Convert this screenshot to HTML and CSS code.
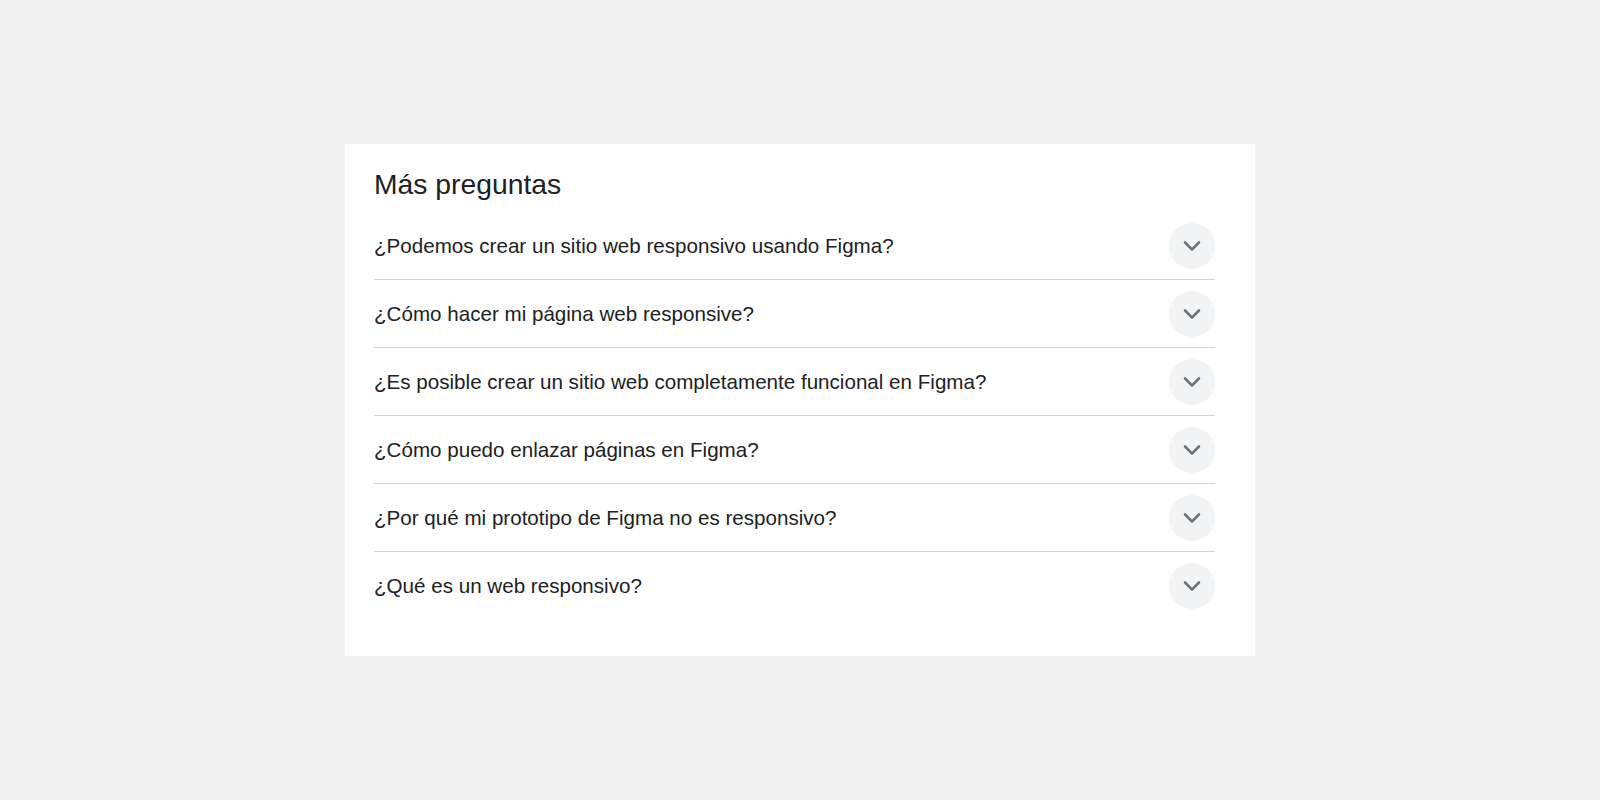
FILE: index.html
```html
<!DOCTYPE html>
<html lang="es">
<head>
<meta charset="utf-8">
<title>Más preguntas</title>
<link rel="stylesheet" href="styles.css">
</head>
<body>
  <section class="card">
    <h2 class="card-title">Más preguntas</h2>
    <ul class="faq">
      <li class="faq-row"><span class="faq-q">¿Podemos crear un sitio web responsivo usando Figma?</span><span class="toggle"><svg viewBox="0 0 24 24" width="24" height="24"><path d="M5 8.5l7 7 7-7"/></svg></span></li>
      <li class="faq-row"><span class="faq-q">¿Cómo hacer mi página web responsive?</span><span class="toggle"><svg viewBox="0 0 24 24" width="24" height="24"><path d="M5 8.5l7 7 7-7"/></svg></span></li>
      <li class="faq-row"><span class="faq-q">¿Es posible crear un sitio web completamente funcional en Figma?</span><span class="toggle"><svg viewBox="0 0 24 24" width="24" height="24"><path d="M5 8.5l7 7 7-7"/></svg></span></li>
      <li class="faq-row"><span class="faq-q">¿Cómo puedo enlazar páginas en Figma?</span><span class="toggle"><svg viewBox="0 0 24 24" width="24" height="24"><path d="M5 8.5l7 7 7-7"/></svg></span></li>
      <li class="faq-row"><span class="faq-q">¿Por qué mi prototipo de Figma no es responsivo?</span><span class="toggle"><svg viewBox="0 0 24 24" width="24" height="24"><path d="M5 8.5l7 7 7-7"/></svg></span></li>
      <li class="faq-row"><span class="faq-q">¿Qué es un web responsivo?</span><span class="toggle"><svg viewBox="0 0 24 24" width="24" height="24"><path d="M5 8.5l7 7 7-7"/></svg></span></li>
    </ul>
  </section>
</body>
</html>
```

FILE: styles.css
```css
html, body {
  margin: 0;
  padding: 0;
}

body {
  background: #f0f0f0;
  font-family: "Liberation Sans", Arial, Helvetica, sans-serif;
  color: #202124;
  width: 1600px;
  height: 800px;
  padding-top: 144px;
  box-sizing: border-box;
}

.card {
  width: 910px;
  height: 512px;
  margin-left: 345px;
  box-sizing: border-box;
  background: #fff;
  padding: 22px 40px 35px 29px;
}

.card-title {
  margin: 0 0 10px;
  font-size: 28.3px;
  line-height: 36px;
  font-weight: 400;
  color: #202124;
}

.faq {
  list-style: none;
  margin: 0;
  padding: 0;
}

.faq-row {
  display: flex;
  align-items: center;
  justify-content: space-between;
  height: 68px;
  box-sizing: border-box;
  border-bottom: 1px solid #d6d6d6;
}

.faq-row:last-child {
  border-bottom: none;
}

.faq-q {
  font-size: 20.6px;
  line-height: 28px;
  color: #202124;
}

.toggle {
  width: 46px;
  height: 46px;
  border-radius: 50%;
  background: #f1f3f4;
  display: flex;
  align-items: center;
  justify-content: center;
  flex-shrink: 0;
}

.toggle svg {
  fill: none;
  stroke: #70757a;
  stroke-width: 2.6;
  stroke-linecap: round;
  stroke-linejoin: round;
}
```
